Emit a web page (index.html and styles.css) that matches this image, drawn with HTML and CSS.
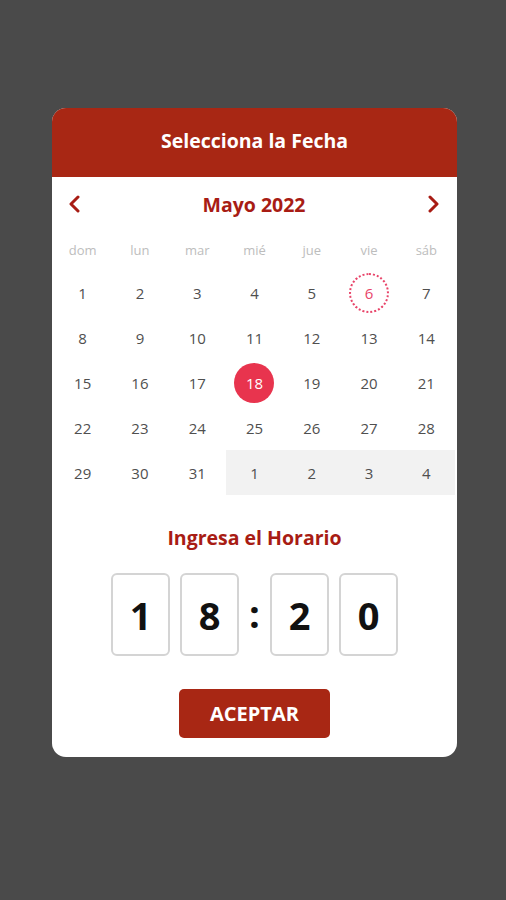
FILE: index.html
```html
<!DOCTYPE html>
<html lang="es">
<head>
  <meta charset="UTF-8" />
  <meta name="viewport" content="width=device-width, initial-scale=1" />
  <title>Selecciona la Fecha</title>
  <link rel="stylesheet" href="styles.css">
</head>
<body>
  <div class="dialog">
    <div class="dialog-header">Selecciona la Fecha</div>

    <div class="month-bar">
      <button class="nav-btn" aria-label="Mes anterior">
        <svg width="14" height="18" viewBox="0 0 14 18"><path d="M11 2 L4 9 L11 16" fill="none" stroke="#a81c14" stroke-width="3" stroke-linecap="round" stroke-linejoin="round"/></svg>
      </button>
      <div class="month-name">Mayo 2022</div>
      <button class="nav-btn" aria-label="Mes siguiente">
        <svg width="14" height="18" viewBox="0 0 14 18"><path d="M3 2 L10 9 L3 16" fill="none" stroke="#a81c14" stroke-width="3" stroke-linecap="round" stroke-linejoin="round"/></svg>
      </button>
    </div>

    <div class="weekdays">
      <div class="weekday">dom</div>
      <div class="weekday">lun</div>
      <div class="weekday">mar</div>
      <div class="weekday">mié</div>
      <div class="weekday">jue</div>
      <div class="weekday">vie</div>
      <div class="weekday">sáb</div>
    </div>

    <div class="calendar">
      <div class="day">1</div>
      <div class="day">2</div>
      <div class="day">3</div>
      <div class="day">4</div>
      <div class="day">5</div>
      <div class="day"><span class="today">6</span></div>
      <div class="day">7</div>

      <div class="day">8</div>
      <div class="day">9</div>
      <div class="day">10</div>
      <div class="day">11</div>
      <div class="day">12</div>
      <div class="day">13</div>
      <div class="day">14</div>

      <div class="day">15</div>
      <div class="day">16</div>
      <div class="day">17</div>
      <div class="day"><span class="selected">18</span></div>
      <div class="day">19</div>
      <div class="day">20</div>
      <div class="day">21</div>

      <div class="day">22</div>
      <div class="day">23</div>
      <div class="day">24</div>
      <div class="day">25</div>
      <div class="day">26</div>
      <div class="day">27</div>
      <div class="day">28</div>

      <div class="day">29</div>
      <div class="day">30</div>
      <div class="day">31</div>
      <div class="day other">1</div>
      <div class="day other">2</div>
      <div class="day other">3</div>
      <div class="day other">4</div>
    </div>

    <h3 class="time-title">Ingresa el Horario</h3>

    <div class="time-row">
      <div class="digit">1</div>
      <div class="digit">8</div>
      <div class="colon">:</div>
      <div class="digit">2</div>
      <div class="digit">0</div>
    </div>

    <div class="actions">
      <button class="accept-btn">ACEPTAR</button>
    </div>
  </div>
</body>
</html>
```

FILE: styles.css
```css
body {
  font-family: "Open Sans", Arial, sans-serif;
  background: #4a4a4a;
  margin: 0;
  padding: 108px 0 0 0;
  height: 900px;
  box-sizing: border-box;
}

.dialog {
  width: 405px;
  margin: 0 0 0 52px;
  background: #ffffff;
  border-radius: 14px;
  overflow: hidden;
  padding-bottom: 19px;
}

.dialog-header {
  height: 69px;
  background: #a82714;
  color: #ffffff;
  font-weight: 700;
  font-size: 19.5px;
  display: flex;
  align-items: center;
  justify-content: center;
  padding-bottom: 4px;
  box-sizing: border-box;
}

.month-bar {
  display: flex;
  align-items: center;
  justify-content: space-between;
  height: 54px;
  padding: 0 16px 0 15px;
}

.nav-btn {
  background: none;
  border: none;
  padding: 0;
  width: 14px;
  height: 18px;
  display: flex;
  cursor: pointer;
}

.month-name {
  color: #a81c14;
  font-weight: 700;
  font-size: 19.5px;
}

.weekdays,
.calendar {
  display: grid;
  grid-template-columns: repeat(7, 1fr);
  padding: 0 2px;
}

.weekdays {
  padding-top: 4px;
}

.calendar {
  grid-auto-rows: 45px;
}

.weekday {
  height: 35px;
  display: flex;
  align-items: flex-start;
  justify-content: center;
  font-size: 13px;
  color: #bdbdbd;
  padding-top: 6px;
  box-sizing: border-box;
}

.day {
  display: flex;
  align-items: center;
  justify-content: center;
  font-size: 15px;
  color: #4f4f4f;
}

.day.other {
  background: #f2f2f2;
}

.today,
.selected {
  width: 40px;
  height: 40px;
  border-radius: 50%;
  display: flex;
  align-items: center;
  justify-content: center;
  box-sizing: border-box;
}

.today {
  border: 2px dotted #e8456a;
  color: #e8456a;
}

.selected {
  background: #e8344e;
  color: #ffffff;
}

.time-title {
  margin: 29px 0 0 0;
  text-align: center;
  color: #a81c14;
  font-weight: 700;
  font-size: 19.5px;
}

.time-row {
  display: flex;
  justify-content: center;
  align-items: center;
  gap: 10px;
  margin-top: 22px;
}

.digit {
  width: 59px;
  height: 83px;
  border: 2px solid #d4d4d4;
  border-radius: 6px;
  box-sizing: border-box;
  display: flex;
  align-items: center;
  justify-content: center;
  font-size: 38px;
  font-weight: 700;
  color: #111111;
}

.colon {
  width: 11px;
  font-size: 38px;
  font-weight: 700;
  color: #111111;
  text-align: center;
  margin-top: -4px;
}

.actions {
  display: flex;
  justify-content: center;
  margin-top: 33px;
}

.accept-btn {
  width: 151px;
  height: 49px;
  background: #a82714;
  color: #ffffff;
  border: none;
  border-radius: 5px;
  font-family: "Open Sans", Arial, sans-serif;
  font-weight: 700;
  font-size: 20px;
  cursor: pointer;
}
```
